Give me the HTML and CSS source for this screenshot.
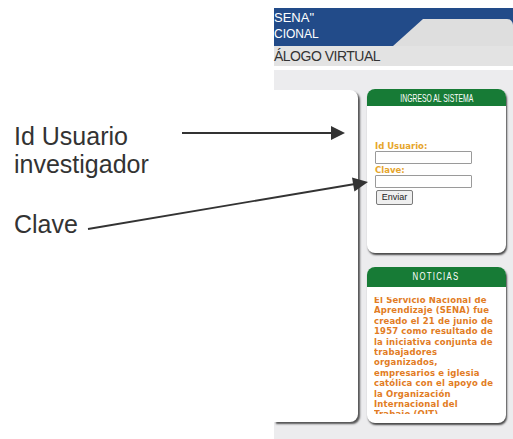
FILE: index.html
```html
<!DOCTYPE html>
<html lang="es">
<head>
    <meta charset="UTF-8">
    <meta name="viewport" content="width=device-width, initial-scale=1.0">
    <title>Ingreso al sistema</title>
    <link rel="stylesheet" href="styles.css">
</head>
<body>

<div class="page">
    <div class="notes">
        <div class="note">Id Usuario<br>investigador</div>
        <div class="note note-clave">Clave</div>
    </div>

    <div class="site">
        <div class="site-head">
            <div class="head-line1">SENA"</div>
            <div class="head-line2">CIONAL</div>
        </div>
        <div class="site-sub">ÁLOGO VIRTUAL</div>
        <div class="site-gap"></div>

        <div class="content">
            <div class="panel"></div>

            <div class="side">
                <div class="box login">
                    <div class="box-title"><span class="narrow">INGRESO AL SISTEMA</span></div>
                    <form class="login-body">
                        <label class="field-label" for="usuario">Id Usuario:</label>
                        <input class="field" type="text" id="usuario">
                        <label class="field-label" for="clave">Clave:</label>
                        <input class="field" type="password" id="clave">
                        <button class="send" type="button">Enviar</button>
                    </form>
                </div>

                <div class="box news">
                    <div class="box-title news-title"><span class="narrow">NOTICIAS</span></div>
                    <div class="news-window">
                        <p class="news-text">
                            El Servicio Nacional de<br>
                            Aprendizaje (SENA) fue<br>
                            creado el 21 de junio de<br>
                            1957 como resultado de<br>
                            la iniciativa conjunta de<br>
                            trabajadores<br>
                            organizados,<br>
                            empresarios e iglesia<br>
                            católica con el apoyo de<br>
                            la Organización<br>
                            Internacional del<br>
                            Trabajo (OIT).
                        </p>
                    </div>
                </div>
            </div>
        </div>
    </div>
</div>

<!-- flechas de la anotacion -->
<svg class="arrows" width="513" height="439" viewBox="0 0 513 439">
    <line x1="182" y1="133" x2="332" y2="133" stroke="#333" stroke-width="1.8"/>
    <polygon points="331,126 345,133 331,140" fill="#333"/>
    <line x1="88" y1="229" x2="355" y2="184" stroke="#333" stroke-width="1.8"/>
    <polygon points="368,182 354.4,191.4 352,177.6" fill="#333"/>
</svg>

</body>
</html>
```

FILE: styles.css
```css
body {
    margin: 0;
    width: 513px;
    height: 439px;
    overflow: hidden;
    position: relative;
    background-color: #fff;
    font-family: "Liberation Sans", Arial, sans-serif;
}

.page {
    display: flex;
    height: 439px;
}

.notes {
    width: 274px;
    flex-shrink: 0;
    box-sizing: border-box;
    padding: 122px 0 0 14px;
    color: #333;
    font-size: 25px;
    line-height: 28px;
}

.note-clave {
    margin-top: 32px;
}

.site {
    flex: 1;
    display: flex;
    flex-direction: column;
    padding-top: 8px;
    min-width: 0;
}

.site-head {
    position: relative;
    height: 38px;
    background-color: #224b89;
    color: #fff;
    overflow: hidden;
}

.site-head::after {
    content: "";
    position: absolute;
    left: 119px;
    right: 0;
    top: 11px;
    bottom: 0;
    background-color: #dedede;
    border-top-right-radius: 6px;
    clip-path: polygon(0 100%, 30px 0, 100% 0, 100% 100%);
}

.head-line1 {
    padding-top: 2px;
    font-size: 13px;
    line-height: 15px;
}

.head-line2 {
    margin-top: 2px;
    font-size: 12px;
    line-height: 14px;
}

.site-sub {
    height: 20px;
    background-color: #e3e3e3;
    color: #333;
    font-size: 14px;
    line-height: 20px;
    letter-spacing: -0.5px;
    white-space: nowrap;
}

.site-gap {
    height: 4px;
    background-color: #fff;
}

.content {
    flex: 1;
    display: flex;
    align-items: flex-start;
    gap: 9px;
    padding-top: 19px;
    background-color: #ececee;
}

.panel {
    width: 84px;
    height: 332px;
    margin-top: 1px;
    background-color: #fff;
    border-radius: 0 8px 8px 0;
    box-shadow: 2px 2px 2px rgba(0, 0, 0, 0.65);
}

.side {
    width: 139px;
    display: flex;
    flex-direction: column;
    gap: 14px;
}

.box {
    background-color: #fff;
    border-radius: 8px;
    box-shadow: 1px 2px 2px rgba(0, 0, 0, 0.7);
    overflow: hidden;
}

.box-title {
    height: 17px;
    background-color: #177b36;
    color: #fff;
    text-align: center;
    font-size: 11px;
    line-height: 18px;
}

.narrow {
    display: inline-block;
    transform: scaleX(0.62);
    white-space: nowrap;
}

.login {
    height: 164px;
}

.login-body {
    display: flex;
    flex-direction: column;
    align-items: flex-start;
    padding: 35px 0 0 8px;
    margin: 0;
}

.field-label {
    font-family: "DejaVu Sans", Verdana, sans-serif;
    font-weight: bold;
    font-size: 8.5px;
    line-height: 10px;
    color: #e6a52b;
}

.field {
    box-sizing: border-box;
    width: 97px;
    height: 13px;
    margin: 0 0 1px;
    padding: 0 2px;
    border: 1px solid #9a9a9a;
    border-radius: 1px;
    font-size: 9px;
}

.send {
    margin-top: 1px;
    margin-left: 1px;
    width: 37px;
    height: 15px;
    padding: 0;
    border: 1px solid #7a7a7a;
    border-radius: 2px;
    background-color: #efefef;
    color: #222;
    font-family: "Liberation Sans", Arial, sans-serif;
    font-size: 9px;
    line-height: 13px;
}

.news {
    height: 156px;
}

.news-title {
    height: 20px;
    line-height: 20px;
    font-size: 10px;
}

.news-title .narrow {
    letter-spacing: 1.6px;
    transform: scaleX(0.78);
}

.news-window {
    height: 117px;
    margin: 10px 0 0 7px;
    overflow: hidden;
}

.news-text {
    margin: -2px 0 0;
    font-family: "DejaVu Sans", Verdana, sans-serif;
    font-weight: bold;
    font-size: 8.5px;
    line-height: 10.4px;
    letter-spacing: 0.15px;
    color: #e27c24;
    white-space: nowrap;
}

.arrows {
    position: absolute;
    top: 0;
    left: 0;
    pointer-events: none;
}
```
